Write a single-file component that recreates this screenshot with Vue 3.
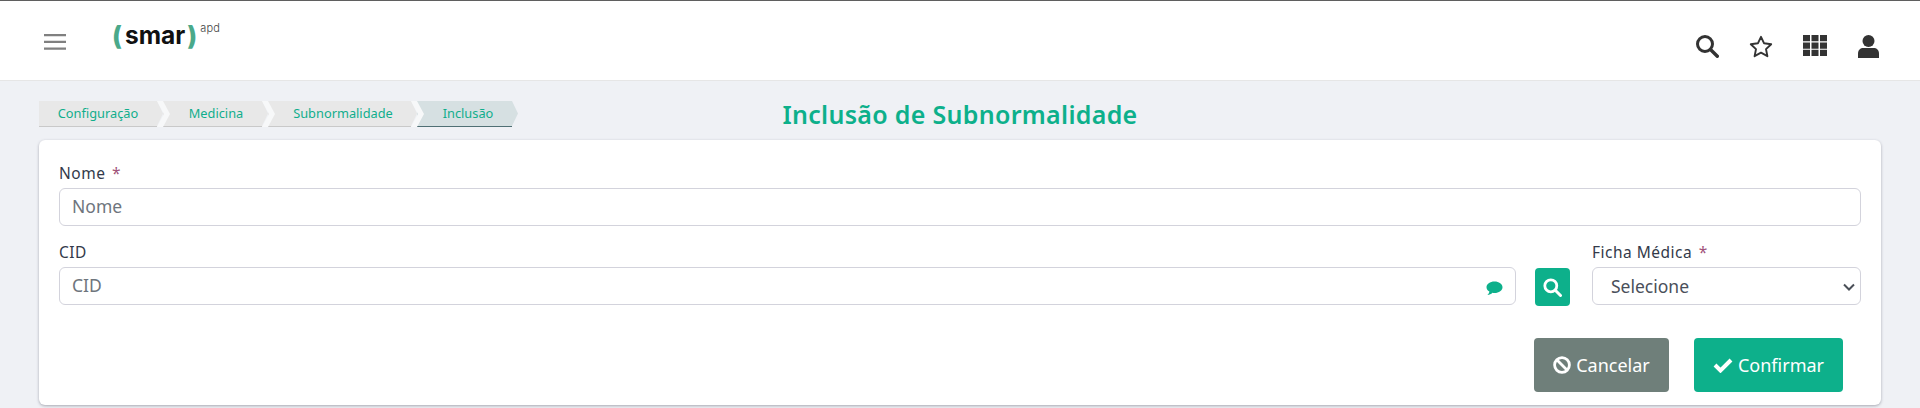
<script setup>
const crumbs = [
  { label: 'Configuração', w: 118, first: true },
  { label: 'Medicina', w: 99 },
  { label: 'Subnormalidade', w: 143 },
  { label: 'Inclusão', w: 95, active: true }
]
</script>

<template>
  <div class="page">
    <header class="topbar">
      <div class="left">
        <svg class="burger" width="22" height="16" viewBox="0 0 22 16"><path d="M0 1.200h22M0 7.800h22M0 14.600h22" stroke="#808080" stroke-width="2.300" fill="none"/></svg>
        <div class="logo"><span class="paren">(</span><span class="smar">smar</span><span class="paren">)</span><span class="apd">apd</span></div>
      </div>
      <div class="tools">
        <svg width="23" height="23" viewBox="0 0 23 23"><circle cx="9" cy="9" r="7.500" fill="none" stroke="#333" stroke-width="3"/><path d="M14.500 14.500l6.800 6.800" stroke="#333" stroke-width="3.400" stroke-linecap="round"/></svg>
        <svg width="24" height="23" viewBox="0 0 24 23"><path d="M12 1.800l3.100 6.500 7.100.9-5.200 4.900 1.400 7.100-6.400-3.500-6.400 3.500 1.400-7.100-5.200-4.900 7.100-.9z" fill="none" stroke="#333" stroke-width="1.900" stroke-linejoin="round"/></svg>
        <svg width="24" height="21" viewBox="0 0 24 21"><path d="M0 0h7v6.300H0zM8.500 0h7v6.300h-7zM17 0h7v6.300h-7zM0 7.400h7v6.300H0zM8.500 7.400h7v6.300h-7zM17 7.400h7v6.300h-7zM0 14.700h7V21H0zM8.500 14.700h7V21h-7zM17 14.700h7V21h-7z" fill="#333"/></svg>
        <svg class="user" width="21" height="23" viewBox="0 0 21 23"><circle cx="10.500" cy="6" r="6" fill="#333"/><path d="M0 23v-4.500C0 15 2.300 13 5.500 13h10c3.200 0 5.500 2 5.500 5.500V23z" fill="#333"/></svg>
      </div>
    </header>
    <div class="titlebar">
      <nav class="crumbs">
        <a v-for="c in crumbs" :key="c.label" class="crumb" :class="{ active: c.active, first: c.first }" :style="{ width: c.w + 'px' }">{{ c.label }}</a>
      </nav>
      <h1>Inclusão de Subnormalidade</h1>
      <div></div>
    </div>
    <main class="card">
      <div class="field">
        <label>Nome <span class="req">*</span></label>
        <input placeholder="Nome" />
      </div>
      <div class="row">
        <div class="field grow">
          <label>CID</label>
          <div class="withicon">
            <input placeholder="CID" />
            <svg class="bubble" width="17" height="15" viewBox="0 0 17 15"><path d="M8.500 .5C4 .5.500 3 .500 6.200c0 1.800 1.100 3.300 2.900 4.300-.2 1.400-1 2.600-2 3.400 2 0 3.800-.8 5-2.100.7.100 1.400.2 2.100.2 4.500 0 8-2.600 8-5.800S13 .5 8.500 .5z" fill="#0db08b"/></svg>
          </div>
        </div>
        <button class="searchbtn" type="button" aria-label="Buscar">
          <svg width="19" height="19" viewBox="0 0 19 19"><circle cx="7.800" cy="7.800" r="6" fill="none" stroke="#fff" stroke-width="2.800"/><path d="M12.300 12.300l5.200 5.200" stroke="#fff" stroke-width="3" stroke-linecap="round"/></svg>
        </button>
        <div class="field sel">
          <label>Ficha Médica <span class="req">*</span></label>
          <div class="selectwrap">
            <select><option>Selecione</option></select>
            <svg class="chev" width="12" height="8" viewBox="0 0 12 8"><path d="M1 1.500l5 5 5-5" fill="none" stroke="#4a4f57" stroke-width="2"/></svg>
          </div>
        </div>
      </div>
      <div class="actions">
        <button class="btn gray" type="button">
          <svg width="18" height="18" viewBox="0 0 18 18"><circle cx="9" cy="9" r="7.400" fill="none" stroke="#fff" stroke-width="2.800"/><path d="M3.800 3.800l10.400 10.400" stroke="#fff" stroke-width="2.800"/></svg>
          Cancelar
        </button>
        <button class="btn green" type="button">
          <svg width="20" height="16" viewBox="0 0 20 16"><path d="M2 8l5.500 5.500L18 3" fill="none" stroke="#fff" stroke-width="4"/></svg>
          Confirmar
        </button>
      </div>
    </main>
  </div>
</template>

<style>
html, body { margin: 0; background: #eff1f5; }
</style>

<style scoped>
.page { height: 408px; background: #eff1f5; font-family: "Noto Sans", sans-serif; overflow: hidden; }
.topbar { box-sizing: border-box; height: 81px; background: #fff; border-top: 1px solid #5f5f5f; border-bottom: 1px solid #e6e6e6; display: flex; justify-content: space-between; }
.left { display: flex; align-items: flex-start; }
.burger { margin: 33px 0 0 44px; }
.logo { margin: 20px 0 0 46px; display: flex; align-items: flex-start; font-family: "Inter", sans-serif; line-height: 30px; }
.paren { color: #4aa98a; font-size: 26px; font-weight: 800; line-height: 30px; }
.smar { color: #111; font-size: 24.5px; font-weight: 700; margin: 0 2px 0 3px; line-height: 28px; }
.apd { font-size: 11px; font-weight: 300; color: #444; line-height: 11px; margin: 2px 0 0 3px; letter-spacing: .2px; }
.tools { display: flex; align-items: flex-start; gap: 30px; padding: 34px 41px 0 0; }
.user { margin-left: 1px; }
.titlebar { display: grid; grid-template-columns: 1fr auto 1fr; padding: 20px 39px 0; height: 39px; align-items: start; }
.crumbs { display: flex; gap: 6px; }
.crumb { position: relative; box-sizing: border-box; height: 26px; padding-left: 7px; line-height: 24px; background: #e8e8e8; border-bottom: 1px solid #c9c9c9; color: #10ae8c; font-size: 12.8px; text-align: center; white-space: nowrap; }
.crumb.first { padding-left: 0; }
.crumb::after { content: ""; position: absolute; left: 100%; top: 0; width: 6px; height: 25px; background: #e8e8e8; clip-path: polygon(0 0, 100% 50%, 0 100%); }
.crumb:not(.first)::before { content: ""; position: absolute; left: -6px; top: 0; width: 13px; height: 26px; background: #f7f8f9; clip-path: polygon(0 0, 6px 0, 13px 50%, 6px 100%, 0 100%, 7px 50%); }
.crumb.active { background: #d6e0e2; border-bottom-color: #4f6f74; }
.crumb.active::after { background: #d6e0e2; }
h1 { margin: -5px 0 0; font-size: 25px; line-height: 36px; font-weight: 600; color: #0db08b; letter-spacing: .3px; white-space: nowrap; }
.card { margin: 0 39px; height: 265px; box-sizing: border-box; background: #fff; border-radius: 6px; box-shadow: 0 1px 3px rgba(60,60,80,.4); padding: 23px 20px 0; color: #3a3f4b; }
.field { display: flex; flex-direction: column; }
label { font-size: 15.500px; line-height: 20px; height: 25px; color: #333a4a; letter-spacing: .5px; }
.req { color: #a0527a; margin-left: 2px; }
input, select { box-sizing: border-box; width: 100%; height: 38px; border: 1px solid #d3d3dc; border-radius: 6px; background: #fff; font: 17.500px "Noto Sans", sans-serif; color: #4a4f5a; outline: none; }
input { padding: 0 12px 2px; }
input::placeholder { color: #6e757d; opacity: 1; }
.row { display: flex; gap: 19px; margin-top: 16px; align-items: flex-start; }
.grow { flex: 1; }
.withicon { position: relative; }
.bubble { position: absolute; right: 13px; top: 14px; }
.searchbtn { margin-top: 26px; width: 35px; height: 38px; border: 0; border-radius: 4px; background: #0db08b; display: flex; align-items: center; justify-content: center; padding: 0; }
.sel { width: 269px; margin-left: 3px; }
.selectwrap { position: relative; }
select { appearance: none; padding: 0 13px 0 18px; }
.chev { position: absolute; right: 6px; top: 16px; }
.actions { display: flex; justify-content: flex-end; gap: 25px; padding-right: 18px; margin-top: 32px; }
.btn { height: 54px; border: 0; border-radius: 4px; color: #fff; font: 18px "Noto Sans", sans-serif; display: flex; align-items: center; justify-content: center; gap: 5px; padding: 0; }
.gray { background: #6f7f7a; width: 135px; }
.green { background: #0db08b; width: 149px; }
</style>
